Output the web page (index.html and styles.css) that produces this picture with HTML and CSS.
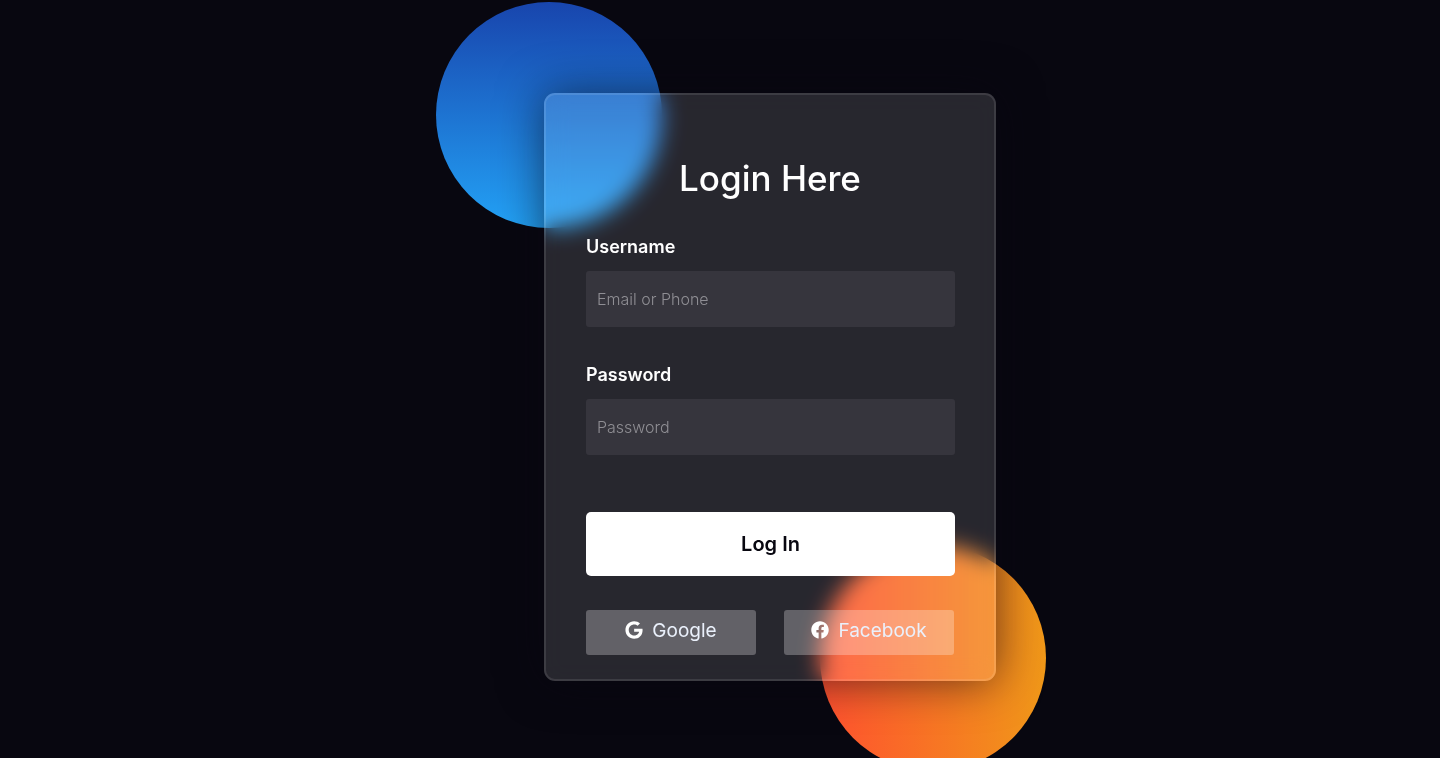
FILE: index.html
```html
<!DOCTYPE html>
<html>
	<head>
		<title>Login Here</title>
		<link rel="stylesheet" href="styles.css">
	</head>
	<body>
		<div class="background">
			<div class="shape shape-blue"></div>
			<div class="shape shape-orange"></div>

			<form class="login-form">
				<h3 class="login-title">Login Here</h3>

				<label class="field-label" for="username">Username</label>
				<input class="field-input" type="text" placeholder="Email or Phone" id="username">

				<label class="field-label field-label-second" for="password">Password</label>
				<input class="field-input" type="password" placeholder="Password" id="password">

				<button class="login-button" type="button">Log In</button>

				<div class="social">
					<div class="social-button">
						<svg class="social-icon" viewBox="0 0 488 512"><path d="M488 261.8C488 403.3 391.1 504 248 504 110.8 504 0 393.2 0 256S110.8 8 248 8c66.8 0 123 24.5 166.3 64.9l-67.5 64.9C258.5 52.6 94.3 116.6 94.3 256c0 86.5 69.1 156.6 153.7 156.6 98.2 0 135-70.4 140.8-106.9H248v-85.3h236.1c2.3 12.7 3.9 24.9 3.9 41.4z"/></svg>
						<span>Google</span>
					</div>
					<div class="social-button">
						<svg class="social-icon" viewBox="0 0 512 512"><path d="M504 256C504 119 393 8 256 8S8 119 8 256c0 123.78 90.69 226.38 209.25 245V327.69h-63V256h63v-54.64c0-62.15 37-96.48 93.67-96.48 27.14 0 55.52 4.84 55.52 4.84v61h-31.28c-30.8 0-40.41 19.12-40.41 38.73V256h68.78l-11 71.69h-57.78V501C413.31 482.38 504 379.78 504 256z"/></svg>
						<span>Facebook</span>
					</div>
				</div>
			</form>
		</div>
	</body>
</html>
```

FILE: styles.css
```css
html {
  box-sizing: border-box;
}

*, *:before, *:after {
  box-sizing: inherit;
}

body {
  margin: 0;
  height: 758px;
  overflow: hidden;
  display: flex;
  justify-content: center;
  padding: 93px 0 0 100px;
  background: #080710;
  font-family: "Inter", "Liberation Sans", sans-serif;
}

.background {
  position: relative;
  width: 452px;
  height: 588px;
}

.shape {
  position: absolute;
  width: 226px;
  height: 226px;
  border-radius: 50%;
}

.shape-blue {
  left: -108px;
  top: -91px;
  background: linear-gradient(#1845ad, #23a2f6);
}

.shape-orange {
  left: 276px;
  top: 452px;
  background: linear-gradient(to right, #ff512f, #f09819);
}

.login-form {
  position: relative;
  height: 588px;
  padding: 0 40px;
  background: rgba(255,255,255,0.13);
  backdrop-filter: blur(11px);
  border: 2px solid rgba(255,255,255,0.1);
  border-radius: 11px;
  box-shadow: 0 0 45px rgba(8,7,16,0.6);
  color: #ffffff;
}

.login-title {
  margin: 0;
  padding-top: 59px;
  font-size: 35px;
  font-weight: 500;
  line-height: 48px;
  text-align: center;
}

.field-label {
  display: block;
  margin-top: 33px;
  font-size: 18px;
  font-weight: 600;
  line-height: 24px;
}

.field-label-second {
  margin-top: 36px;
}

.field-input {
  display: block;
  width: 369px;
  height: 56px;
  margin-top: 12px;
  padding: 0 11px;
  background: rgba(255,255,255,0.07);
  border: none;
  border-radius: 3px;
  font-family: inherit;
  font-size: 16px;
  font-weight: 300;
  color: #ffffff;
}

.field-input::placeholder {
  color: #8f8e94;
}

.login-button {
  display: block;
  width: 369px;
  height: 64px;
  margin-top: 57px;
  background: #ffffff;
  border: none;
  border-radius: 5px;
  font-family: inherit;
  font-size: 20px;
  font-weight: 600;
  color: #080710;
}

.social {
  display: flex;
  gap: 28px;
  margin-top: 34px;
}

.social-button {
  display: flex;
  align-items: center;
  justify-content: center;
  gap: 9px;
  width: 170px;
  height: 45px;
  padding-bottom: 5px;
  background: rgba(255,255,255,0.27);
  border-radius: 3px;
  font-size: 19px;
  font-weight: 400;
  color: #eaf0fb;
}

.social-icon {
  width: 18px;
  height: 18px;
  fill: #ffffff;
}
```
